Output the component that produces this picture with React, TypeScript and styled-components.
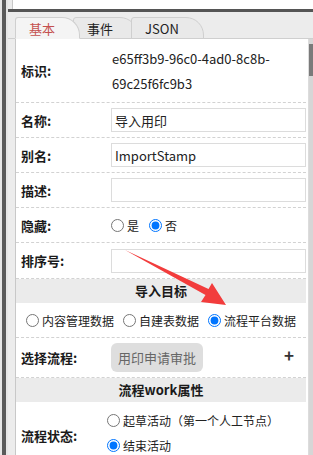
import React from 'react';
import styled, { createGlobalStyle } from 'styled-components';

const GlobalStyle = createGlobalStyle`
  html, body {
    margin: 0;
    padding: 0;
    background: #ececec;
    overflow: hidden;
  }
  body {
    font-family: "Noto Sans CJK SC", "Microsoft YaHei", sans-serif;
    font-size: 13px;
    color: #222;
  }
`;

const Frame = styled.div`
  position: relative;
  display: flex;
  height: 455px;
  overflow: hidden;
`;

const LeftEdge = styled.div`
  width: 8px;
  flex-shrink: 0;
  background: linear-gradient(to right, #e6e6e6 0 2px, #5a5a5a 2px 6px, #e6e6e6 6px 8px);
`;

const Main = styled.div`
  flex: 1;
  min-width: 0;
  display: flex;
  flex-direction: column;
  background: #ececec;
`;

const TopBox = styled.div`
  height: 9px;
  margin-left: 4px;
  background: #fff;
  border-left: 1px solid #c8c8c8;
`;

const DarkBar = styled.div`
  height: 3px;
  background: #555;
`;

const TabStrip = styled.div`
  height: 26px;
  display: flex;
  align-items: flex-end;
  padding-left: 7px;
  border-bottom: 1px solid #cfcfcf;
`;

const Tab = styled.div<{ $active?: boolean }>`
  position: relative;
  z-index: ${(p) => (p.$active ? 2 : 1)};
  height: 20px;
  line-height: 21px;
  padding: 0 24px 0 13px;
  margin-left: -7px;
  margin-bottom: -1px;
  border: 1px solid #cfcfcf;
  border-bottom: ${(p) => (p.$active ? '1px solid #f4f4f4' : '1px solid #cfcfcf')};
  border-radius: 3px 18px 0 0;
  background: ${(p) => (p.$active ? '#f4f4f4' : '#e9e9e9')};
  color: ${(p) => (p.$active ? '#c4504e' : '#222')};
  font-size: 13px;

  &:first-child {
    margin-left: 0;
  }
`;

const Body = styled.div`
  flex: 1;
  display: flex;
  margin-left: 7px;
  background: #fff;
  border-left: 1px solid #c8c8c8;
  min-height: 0;
`;

const Form = styled.div`
  flex: 1;
  min-width: 0;
  border-right: 1px solid #dcdcdc;
  padding-right: 2px;
`;

const ScrollTrack = styled.div`
  width: 4px;
  flex-shrink: 0;
  background: #d6d6d6;
  padding-top: 5px;
`;

const ScrollThumb = styled.div`
  height: 32px;
  background: #7a7a7a;
`;

const Row = styled.div<{ $h?: number }>`
  display: grid;
  grid-template-columns: 90px 1fr;
  align-items: center;
  min-height: ${(p) => p.$h ?? 35}px;
  border-bottom: 1px dashed #d2d2d2;
  box-sizing: border-box;
`;

const Label = styled.div`
  padding-left: 5px;
  font-weight: 600;
  color: #1a1a1a;
`;

const Value = styled.div`
  padding-left: 5px;
  display: flex;
  align-items: center;
`;

const IdText = styled.div`
  padding-left: 6px;
  line-height: 25px;
  color: #222;
`;

const Input = styled.input`
  width: 100%;
  height: 24px;
  box-sizing: border-box;
  border: 1px solid #dcdcdc;
  padding: 0 3px;
  font-family: inherit;
  font-size: 13px;
  color: #222;
  outline: none;
`;

const RadioLabel = styled.label`
  display: inline-flex;
  align-items: center;
  gap: 3px;
  font-size: 12px;
  line-height: 17px;
  white-space: nowrap;
`;

const Radio = styled.input.attrs({ type: 'radio' })`
  margin: 0;
  width: 13px;
  height: 13px;
  accent-color: #0075ff;
`;

const InlineRadios = styled.div`
  display: flex;
  align-items: center;
  gap: 10px;
`;

const SectionHeader = styled.div`
  height: 24px;
  line-height: 24px;
  background: #ebebeb;
  text-align: center;
  font-weight: 600;
  color: #1a1a1a;
`;

const CenterRadios = styled.div`
  height: 35px;
  display: flex;
  align-items: center;
  justify-content: center;
  gap: 9px;
  border-bottom: 1px dashed #d2d2d2;
  box-sizing: border-box;
`;

const PickButton = styled.button`
  height: 29px;
  padding: 0 7px;
  border: none;
  border-radius: 6px;
  background: #dedede;
  color: #666;
  font-family: inherit;
  font-size: 13px;
`;

const ValueSpread = styled(Value)`
  justify-content: space-between;
  padding-right: 12px;
`;

const Plus = styled.span`
  font-size: 17px;
  font-weight: 700;
  color: #333;
  margin-top: -6px;
`;

const StackRadios = styled.div`
  align-self: start;
  display: flex;
  flex-direction: column;
  gap: 8px;
  padding: 10px 0 0 1px;
`;

const Overlay = styled.svg`
  position: absolute;
  left: 0;
  top: 0;
  pointer-events: none;
`;

export default function App() {
  return (
    <>
      <GlobalStyle />
      <Frame>
        <LeftEdge />
        <Main>
          <TopBox />
          <DarkBar />
          <TabStrip>
            <Tab $active>基本</Tab>
            <Tab>事件</Tab>
            <Tab>JSON</Tab>
          </TabStrip>
          <Body>
            <Form>
              <Row $h={64}>
                <Label>标识:</Label>
                <IdText>
                  <div>e65ff3b9-96c0-4ad0-8c8b-</div>
                  <div>69c25f6fc9b3</div>
                </IdText>
              </Row>
              <Row>
                <Label>名称:</Label>
                <Value>
                  <Input defaultValue="导入用印" />
                </Value>
              </Row>
              <Row>
                <Label>别名:</Label>
                <Value>
                  <Input defaultValue="ImportStamp" />
                </Value>
              </Row>
              <Row>
                <Label>描述:</Label>
                <Value>
                  <Input defaultValue="" />
                </Value>
              </Row>
              <Row>
                <Label>隐藏:</Label>
                <Value>
                  <InlineRadios>
                    <RadioLabel>
                      <Radio name="hide" /> 是
                    </RadioLabel>
                    <RadioLabel>
                      <Radio name="hide" defaultChecked />否
                    </RadioLabel>
                  </InlineRadios>
                </Value>
              </Row>
              <Row $h={36}>
                <Label>排序号:</Label>
                <Value>
                  <Input defaultValue="" />
                </Value>
              </Row>
              <SectionHeader>导入目标</SectionHeader>
              <CenterRadios>
                <RadioLabel>
                  <Radio name="target" /> 内容管理数据
                </RadioLabel>
                <RadioLabel>
                  <Radio name="target" />自建表数据
                </RadioLabel>
                <RadioLabel>
                  <Radio name="target" defaultChecked />流程平台数据
                </RadioLabel>
              </CenterRadios>
              <Row $h={40}>
                <Label>选择流程:</Label>
                <ValueSpread>
                  <PickButton>用印申请审批</PickButton>
                  <Plus>+</Plus>
                </ValueSpread>
              </Row>
              <SectionHeader>流程work属性</SectionHeader>
              <Row $h={68}>
                <Label>流程状态:</Label>
                <StackRadios>
                  <RadioLabel>
                    <Radio name="state" />起草活动（第一个人工节点）
                  </RadioLabel>
                  <RadioLabel>
                    <Radio name="state" defaultChecked />结束活动
                  </RadioLabel>
                </StackRadios>
              </Row>
            </Form>
            <ScrollTrack>
              <ScrollThumb />
            </ScrollTrack>
          </Body>
        </Main>
        <Overlay width="313" height="455" viewBox="0 0 313 455">
          <polygon
            points="125,250 208.5,289 212,283 226,305 201,302 205.5,295"
            fill="#f23c3c"
          />
        </Overlay>
      </Frame>
    </>
  );
}
